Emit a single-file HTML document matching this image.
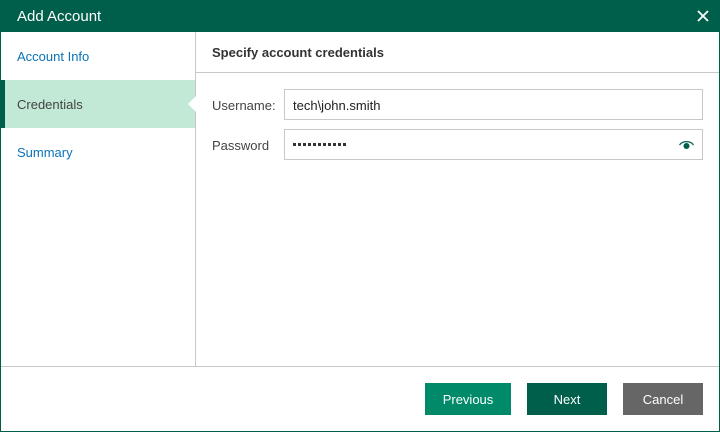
<!DOCTYPE html>
<html><head><style>
body{margin:0;width:720px;height:432px;overflow:hidden;font-family:"Liberation Sans",sans-serif;}
.win{position:absolute;left:0;top:0;width:718px;height:430px;border:1px solid #005f4b;background:#fff;}
.title{position:absolute;left:0;top:0;width:720px;height:32px;background:#005f4b;color:#fff;font-size:15px;}
.title span{position:absolute;left:17px;top:8px;}
.x{position:absolute;left:697px;top:10px;}
.nav{position:absolute;left:1px;top:32px;width:194px;height:334px;border-right:1px solid #c8c8c8;}
.item{position:absolute;left:0;width:194px;height:48px;font-size:13px;color:#0a74b8;}
.item span{position:absolute;left:16px;top:17px;}
.act{background:#c2e8d6;color:#444;}
.act:before{content:"";position:absolute;left:0;top:0;width:4px;height:48px;background:#005f4b;}
.act:after{content:"";position:absolute;right:-1px;top:16px;border:8px solid transparent;border-right-color:#fff;border-left:none;}
.hdr{position:absolute;left:196px;top:32px;width:523px;height:40px;border-bottom:1px solid #c8c8c8;}
.hdr span{position:absolute;left:16px;top:13px;font-size:13px;font-weight:bold;color:#333;}
.lbl{position:absolute;left:212px;font-size:13px;color:#444;}
.inp{position:absolute;left:284px;width:417px;height:29px;border:1px solid #c8c8c8;font-size:13px;color:#222;}
.inp span{position:absolute;left:8px;top:8px;}
.foot{position:absolute;left:1px;top:366px;width:718px;border-top:1px solid #c8c8c8;}
.btn{position:absolute;top:383px;height:32px;color:#fff;font-size:13px;text-align:center;line-height:33px;}
</style></head><body>
<div class="win"></div>
<div class="title"><span>Add Account</span>
<svg class="x" width="12" height="12" viewBox="0 0 12 12"><path d="M1 1L11 11M11 1L1 11" stroke="#fff" stroke-width="1.8"/></svg></div>
<div class="nav">
<div class="item" style="top:0"><span>Account Info</span></div>
<div class="item act" style="top:48px"><span>Credentials</span></div>
<div class="item" style="top:96px"><span>Summary</span></div>
</div>
<div class="hdr"><span>Specify account credentials</span></div>
<div class="lbl" style="top:98px">Username:</div>
<div class="inp" style="top:89px"><span>tech\john.smith</span></div>
<div class="lbl" style="top:138px">Password</div>
<div class="inp" style="top:129px">
<svg style="position:absolute;left:8px;top:13px" width="60" height="4"><g fill="#333"><rect x="0" y="0" width="3" height="3"/><rect x="5" y="0" width="3" height="3"/><rect x="10" y="0" width="3" height="3"/><rect x="15" y="0" width="3" height="3"/><rect x="20" y="0" width="3" height="3"/><rect x="25" y="0" width="3" height="3"/><rect x="30" y="0" width="3" height="3"/><rect x="35" y="0" width="3" height="3"/><rect x="40" y="0" width="3" height="3"/><rect x="45" y="0" width="3" height="3"/><rect x="50" y="0" width="3" height="3"/></g></svg>
<svg style="position:absolute;left:393px;top:8px" width="17" height="13" viewBox="0 0 17 13"><path d="M1.5 7A8 6.5 0 0 1 15.5 7" fill="none" stroke="#005f4b" stroke-width="1.2"/><circle cx="8.5" cy="8" r="3" fill="#005f4b"/></svg></div>
<div class="foot"></div>
<div class="btn" style="left:425px;width:86px;background:#008a6a">Previous</div>
<div class="btn" style="left:527px;width:80px;background:#005f4b">Next</div>
<div class="btn" style="left:623px;width:80px;background:#666">Cancel</div>
</body></html>
